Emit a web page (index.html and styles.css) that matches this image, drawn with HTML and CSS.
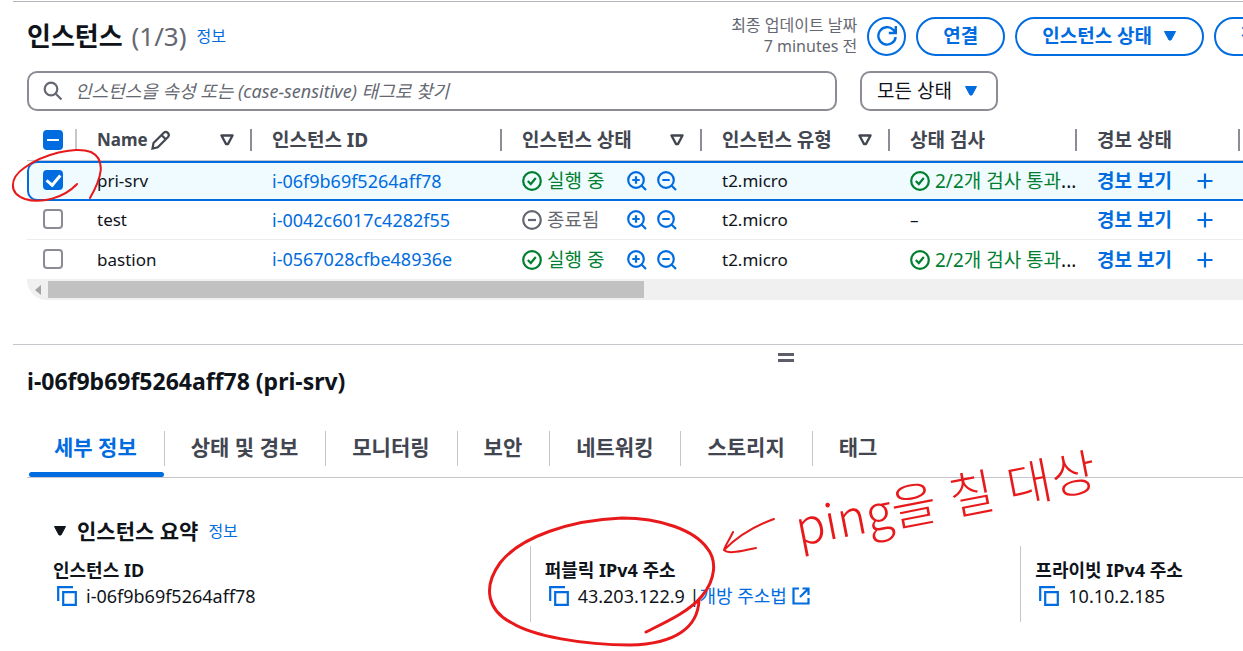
FILE: index.html
```html
<!doctype html>
<html lang="ko">
  <head>
    <meta charset="UTF-8" />
    <meta name="viewport" content="width=device-width, initial-scale=1.0" />
    <title>인스턴스</title>
    <link rel="stylesheet" href="styles.css">
  </head>
  <body>
    <!-- shared icons -->
    <svg class="sprite" aria-hidden="true">
      <symbol id="i-ok" viewBox="0 0 20 20">
        <circle cx="10" cy="10" r="8.8" /><path d="M5.8 10l3 3 5-6" />
      </symbol>
      <symbol id="i-stop" viewBox="0 0 20 20">
        <circle cx="10" cy="10" r="8.8" /><path d="M6 10h8" />
      </symbol>
      <symbol id="i-zoom-in" viewBox="0 0 20 20">
        <circle cx="9" cy="9" r="7.8" /><path d="M14.5 14.5l4.5 4.5M5.3 9h7.4M9 5.3v7.4" />
      </symbol>
      <symbol id="i-zoom-out" viewBox="0 0 20 20">
        <circle cx="9" cy="9" r="7.8" /><path d="M14.5 14.5l4.5 4.5M5.3 9h7.4" />
      </symbol>
      <symbol id="i-plus" viewBox="0 0 20 20"><path d="M10 2.5v15M2.5 10h15" /></symbol>
      <symbol id="i-copy" viewBox="0 0 20 20">
        <path d="M1.2 15V1.2H16" /><path d="M6.2 6.2h12.6v12.6H6.2z" />
      </symbol>
      <symbol id="i-caret" viewBox="0 0 14 12">
        <path d="M1.5 1.5h11L8 10H6z" />
      </symbol>
    </svg>

    <main class="page">
      <section class="instances">
        <header class="toolbar">
          <h1>인스턴스 <span class="count">(1/3)</span></h1>
          <a class="info" href="#">정보</a>
          <p class="updated">최종 업데이트 날짜<br />7 minutes 전</p>
          <div class="actions">
            <button class="btn btn-round" aria-label="새로 고침">
              <svg class="icon refresh" viewBox="0 0 20 20"><path d="M18.7 11a8.7 8.7 0 1 1-2.4-7.2l2.2 2.7M18.8 0v7h-7" /></svg>
            </button>
            <button class="btn">연결</button>
            <button class="btn">인스턴스 상태 <svg class="caret"><use href="#i-caret" /></svg></button>
            <button class="btn btn-last">작업 <svg class="caret"><use href="#i-caret" /></svg></button>
          </div>
        </header>

        <div class="filters">
          <div class="search">
            <svg class="icon" viewBox="0 0 20 20"><circle cx="8" cy="8" r="6.3" /><path d="M12.5 12.5l6 6" /></svg>
            <input type="text" aria-label="인스턴스 찾기" placeholder="인스턴스을 속성 또는 (case-sensitive) 태그로 찾기" />
          </div>
          <div class="state-filter">
            <select aria-label="상태 필터"><option>모든 상태</option></select>
            <svg class="caret"><use href="#i-caret" /></svg>
          </div>
        </div>

        <div class="table-wrap">
          <table>
            <colgroup>
              <col class="c-check" /><col class="c-name" /><col class="c-id" /><col class="c-state" />
              <col class="c-type" /><col class="c-status" /><col class="c-alarm" /><col />
            </colgroup>
            <thead>
              <tr>
                <th><div class="head light"><input type="checkbox" class="some" aria-label="모두 선택" /></div></th>
                <th><div class="head"><span class="latin">Name</span>
                  <svg class="icon pencil" viewBox="0 0 20 20"><path d="M1.5 18.5l1-5.5L12.8 2.7q2-1.8 4 .2t.2 4L6.8 17.3zM10.5 5l4.5 4.5" /></svg>
                  <svg class="caret sort"><use href="#i-caret" /></svg></div></th>
                <th><div class="head">인스턴스 ID</div></th>
                <th><div class="head">인스턴스 상태 <svg class="caret sort"><use href="#i-caret" /></svg></div></th>
                <th><div class="head">인스턴스 유형 <svg class="caret sort"><use href="#i-caret" /></svg></div></th>
                <th><div class="head">상태 검사</div></th>
                <th><div class="head">경보 상태</div></th>
                <th></th>
              </tr>
            </thead>
            <tbody>
              <tr class="selected">
                <td class="pick"><input type="checkbox" aria-label="pri-srv" checked /></td>
                <td>pri-srv</td>
                <td><a class="id" href="#">i-06f9b69f5264aff78</a></td>
                <td><div class="cell">
                  <span class="state ok"><svg class="icon"><use href="#i-ok" /></svg>실행 중</span>
                  <button class="tool" aria-label="필터 추가"><svg class="icon"><use href="#i-zoom-in" /></svg></button>
                  <button class="tool" aria-label="필터 제외"><svg class="icon"><use href="#i-zoom-out" /></svg></button>
                </div></td>
                <td>t2.micro</td>
                <td><span class="check ok"><svg class="icon"><use href="#i-ok" /></svg>2/2개 검사 통과<span class="dots">...</span></span></td>
                <td><div class="cell alarm"><a href="#">경보 보기</a>
                  <button class="tool" aria-label="경보 추가"><svg class="icon"><use href="#i-plus" /></svg></button></div></td>
                <td></td>
              </tr>
              <tr>
                <td class="pick"><input type="checkbox" aria-label="test" /></td>
                <td>test</td>
                <td><a class="id" href="#">i-0042c6017c4282f55</a></td>
                <td><div class="cell">
                  <span class="state stopped"><svg class="icon"><use href="#i-stop" /></svg>종료됨</span>
                  <button class="tool" aria-label="필터 추가"><svg class="icon"><use href="#i-zoom-in" /></svg></button>
                  <button class="tool" aria-label="필터 제외"><svg class="icon"><use href="#i-zoom-out" /></svg></button>
                </div></td>
                <td>t2.micro</td>
                <td>–</td>
                <td><div class="cell alarm"><a href="#">경보 보기</a>
                  <button class="tool" aria-label="경보 추가"><svg class="icon"><use href="#i-plus" /></svg></button></div></td>
                <td></td>
              </tr>
              <tr>
                <td class="pick"><input type="checkbox" aria-label="bastion" /></td>
                <td>bastion</td>
                <td><a class="id" href="#">i-0567028cfbe48936e</a></td>
                <td><div class="cell">
                  <span class="state ok"><svg class="icon"><use href="#i-ok" /></svg>실행 중</span>
                  <button class="tool" aria-label="필터 추가"><svg class="icon"><use href="#i-zoom-in" /></svg></button>
                  <button class="tool" aria-label="필터 제외"><svg class="icon"><use href="#i-zoom-out" /></svg></button>
                </div></td>
                <td>t2.micro</td>
                <td><span class="check ok"><svg class="icon"><use href="#i-ok" /></svg>2/2개 검사 통과<span class="dots">...</span></span></td>
                <td><div class="cell alarm"><a href="#">경보 보기</a>
                  <button class="tool" aria-label="경보 추가"><svg class="icon"><use href="#i-plus" /></svg></button></div></td>
                <td></td>
              </tr>
            </tbody>
          </table>
        </div>
        <div class="scrollbar">
          <svg class="scroll-arrow" viewBox="0 0 6 10"><path d="M6 0v10L0 5z" /></svg>
          <div class="thumb"></div>
        </div>
      </section>

      <section class="details">
        <div class="handle"></div>
        <h2>i-06f9b69f5264aff78 (pri-srv)</h2>
        <nav class="tabs">
          <a class="tab active" href="#">세부 정보</a>
          <a class="tab" href="#">상태 및 경보</a>
          <a class="tab" href="#">모니터링</a>
          <a class="tab" href="#">보안</a>
          <a class="tab" href="#">네트워킹</a>
          <a class="tab" href="#">스토리지</a>
          <a class="tab" href="#">태그</a>
        </nav>

        <div class="summary">
          <h3><svg class="caret"><use href="#i-caret" /></svg>인스턴스 요약 <a class="info" href="#">정보</a></h3>
          <dl class="facts">
            <div class="fact">
              <dt>인스턴스 ID</dt>
              <dd><svg class="icon copy"><use href="#i-copy" /></svg>i-06f9b69f5264aff78</dd>
            </div>
            <div class="fact">
              <dt>퍼블릭 IPv4 주소</dt>
              <dd><svg class="icon copy"><use href="#i-copy" /></svg>43.203.122.9 |
                <a href="#">개방 주소법 <svg class="icon external" viewBox="0 0 20 20"><path d="M8 2.5H2.5v15h15V12M11.5 2.5h6V9M17 3l-8 8" /></svg></a></dd>
            </div>
            <div class="fact">
              <dt>프라이빗 IPv4 주소</dt>
              <dd><svg class="icon copy"><use href="#i-copy" /></svg>10.10.2.185</dd>
            </div>
          </dl>
        </div>
      </section>

      <!-- pen marks on top of the console -->
      <svg class="ink" width="1243" height="651" viewBox="0 0 1243 651">
        <path class="thin" d="M77 184C64 198 41 204 25 199C8 193 10 178 24 168C43 154 75 146 91 152C107 160 101 179 90 198" />
        <path d="M646 632C664 623 689 612 702 596C716 579 717 560 707 548C694 530 660 518 622 518C570 520 520 537 500 563C482 588 488 611 512 623C533 636 583 645 630 645C676 644 698 627 699 600" />
        <path class="thin" d="M774 519C757 525 739 535 724 550C726 544 730 539 733 532M724 550C729 555 744 550 756 548" />
        <text class="note" x="799" y="546" transform="rotate(-11 799 546)">ping을 칠 대상</text>
      </svg>
    </main>
  </body>
</html>
```

FILE: styles.css
```css
* {
  box-sizing: border-box;
}
body {
  margin: 0;
  background: #fff;
  color: #0f141a;
  font-family: "Noto Sans", "Noto Sans CJK KR", sans-serif;
  font-size: 17px;
  line-height: 26px;
}
h1,
h2,
h3,
p,
dl,
dd {
  margin: 0;
}
a {
  color: #006ce0;
  text-decoration: none;
}
button,
input,
select {
  font: inherit;
  margin: 0;
}
.page {
  position: relative;
  padding: 1px 0 0 13px;
  overflow: hidden;
}
.sprite {
  display: none;
}
.icon {
  flex: none;
  width: 20px;
  height: 20px;
  fill: none;
  stroke: currentColor;
  stroke-width: 2.2;
}
.caret {
  flex: none;
  width: 14px;
  height: 12px;
  fill: currentColor;
  stroke: currentColor;
  stroke-width: 1;
  stroke-linejoin: round;
}
.info {
  font-size: 16px;
  font-weight: 400;
}

/* instance list */
.instances {
  border-top: 1px solid #b4b4bb;
  padding: 13px 0 0 14px;
}
.toolbar {
  display: flex;
  align-items: center;
}
h1 {
  font-size: 26px;
  line-height: 36px;
  margin-right: 10px;
}
.count {
  margin-left: 2px;
  color: #656871;
  font-weight: 400;
}
.updated {
  margin-left: auto;
  color: #656871;
  font-size: 16px;
  line-height: 21px;
  text-align: right;
}
.actions {
  display: flex;
  gap: 10px;
  margin-left: 10px;
}
.btn {
  display: flex;
  align-items: center;
  gap: 11px;
  height: 39px;
  padding: 0 25px;
  border: 2px solid #006ce0;
  border-radius: 20px;
  background: #fff;
  color: #006ce0;
  font-size: 19px;
  font-weight: 700;
  white-space: nowrap;
}
.btn-round {
  width: 39px;
  padding: 0;
  justify-content: center;
}
.refresh {
  stroke-width: 2.4;
}
.btn-last {
  margin-right: -85px;
}
.filters {
  display: flex;
  gap: 23px;
  margin-top: 14px;
}
.search {
  display: flex;
  align-items: center;
  flex: 0 1 810px;
  height: 40px;
  padding-left: 14px;
  border: 2px solid #8c8c94;
  border-radius: 10px;
  color: #656871;
}
.search input {
  flex: 1;
  min-width: 0;
  padding: 0 12px;
  border: 0;
  outline: 0;
  background: none;
  font-size: 18px;
}
.search input::placeholder {
  color: #656871;
  font-style: italic;
}
.state-filter {
  display: flex;
  align-items: center;
  color: #006ce0;
}
.state-filter select {
  appearance: none;
  width: 138px;
  height: 40px;
  padding: 0 15px;
  border: 2px solid #8c8c94;
  border-radius: 10px;
  background: none;
  color: #0f141a;
  font-size: 19px;
}
.state-filter .caret {
  margin-left: -34px;
  pointer-events: none;
}
.table-wrap {
  overflow: hidden;
  margin-top: 9px;
}
table {
  width: calc(100% + 40px);
  table-layout: fixed;
  border-collapse: separate;
  border-spacing: 0;
}
.c-check {
  width: 50px;
}
.c-name {
  width: 175px;
}
.c-id {
  width: 250px;
}
.c-state {
  width: 200px;
}
.c-type {
  width: 188px;
}
.c-status {
  width: 187px;
}
.c-alarm {
  width: 163px;
}
th {
  height: 41px;
  padding: 0;
  border-bottom: 1px solid #c6c6cd;
  color: #424650;
  text-align: left;
}
.head {
  display: flex;
  align-items: center;
  height: 22px;
  padding: 0 16px 0 20px;
  border-right: 2px solid #8c8c94;
  font-size: 19px;
}
.head.light {
  padding: 0 0 0 16px;
  border-color: #c6c6cd;
}
.latin {
  font-size: 17px;
}
.pencil {
  margin-left: 3px;
}
.sort {
  margin-left: auto;
  fill: none;
  stroke-width: 2.4;
}
td {
  height: 39px;
  padding: 0 0 0 20px;
  border-bottom: 1px solid #ebebf0;
  white-space: nowrap;
}
tr:last-child td {
  border-bottom: 0;
}
td.pick {
  padding: 0 0 2px 16px;
}
.selected td {
  height: 40px;
  border-top: 2px solid #006ce0;
  border-bottom: 2px solid #006ce0;
  background: #f0fbff;
}
.selected td.pick {
  padding-left: 14px;
  border-left: 2px solid #006ce0;
  border-radius: 10px 0 0 10px;
}
input[type="checkbox"] {
  appearance: none;
  display: grid;
  place-items: center;
  width: 20px;
  height: 20px;
  border: 2px solid #8c8c94;
  border-radius: 4px;
  background: #fff;
}
input[type="checkbox"]:checked,
input[type="checkbox"].some {
  border-color: #006ce0;
  background: #006ce0;
}
input[type="checkbox"]:checked::after {
  content: "";
  width: 6px;
  height: 11px;
  margin-bottom: 3px;
  border: solid #fff;
  border-width: 0 3px 3px 0;
  transform: rotate(40deg);
}
input[type="checkbox"].some::after {
  content: "";
  width: 12px;
  height: 2px;
  background: #fff;
}
.id {
  font-size: 18px;
}
.cell {
  display: flex;
  align-items: center;
  gap: 10px;
}
.state {
  display: flex;
  align-items: center;
  gap: 5px;
  width: 95px;
  font-size: 19px;
}
.check {
  display: flex;
  align-items: center;
  font-size: 19px;
}
.check .icon {
  margin-right: 5px;
}
.ok {
  color: #00802f;
}
.stopped {
  color: #656871;
}
.dots {
  color: #0f141a;
}
.tool {
  display: flex;
  padding: 0;
  border: 0;
  background: none;
  color: #006ce0;
}
.alarm {
  justify-content: space-between;
  padding-right: 25px;
  font-size: 19px;
  font-weight: 700;
}
.scrollbar {
  display: flex;
  align-items: center;
  height: 21px;
  border-radius: 0 0 0 20px;
  background: #f0f0f0;
}
.scroll-arrow {
  width: 6px;
  height: 10px;
  margin: 0 7px 0 8px;
  fill: #a3a3a3;
}
.thumb {
  width: 49%;
  height: 17px;
  background: #c1c1c1;
}

/* split panel, runs past the right edge of the window */
.details {
  width: calc(100% + 316px);
  margin-top: 44px;
  padding: 8px 14px 27px;
  border-top: 1px solid #c6c6cd;
}
.handle {
  width: 16px;
  height: 9px;
  margin: 0 auto;
  border: solid #5c5f69;
  border-width: 3px 0;
}
h2 {
  margin-top: 4px;
  font-size: 23px;
  line-height: 30px;
}
.tabs {
  display: flex;
  align-items: flex-start;
  margin-top: 35px;
  border-bottom: 1px solid #c6c6cd;
}
.tab {
  position: relative;
  height: 46px;
  padding: 0 27px;
  color: #424650;
  font-size: 21px;
  font-weight: 700;
  line-height: 33px;
}
.tab + .tab::before {
  content: "";
  position: absolute;
  left: 0;
  top: 0;
  height: 35px;
  border-left: 1px solid #c6c6cd;
}
.tab.active {
  color: #006ce0;
}
.tab.active::after {
  content: "";
  position: absolute;
  left: 2px;
  right: 0;
  bottom: 0;
  height: 5px;
  border-radius: 3px;
  background: #006ce0;
}
.summary {
  padding: 38px 34px 0 12px;
}
h3 {
  display: flex;
  align-items: center;
  gap: 10px;
  padding-left: 14px;
  font-size: 21px;
  line-height: 30px;
}
.facts {
  display: grid;
  grid-template-columns: repeat(3, 1fr);
}
.fact {
  height: 76px;
  padding: 11px 0 0 14px;
}
.fact + .fact {
  border-left: 1px solid #c6c6cd;
}
dt {
  font-size: 18px;
  font-weight: 700;
}
dd {
  display: flex;
  align-items: center;
  font-size: 18px;
}
dd a {
  display: flex;
  align-items: center;
  gap: 4px;
}
.copy {
  margin: 0 9px 0 4px;
  color: #006ce0;
}

.ink {
  position: absolute;
  left: 0;
  top: 0;
  pointer-events: none;
  fill: none;
  stroke: #e8191b;
  stroke-width: 3;
  stroke-linecap: round;
  stroke-linejoin: round;
}
.ink .thin {
  stroke-width: 2;
}
.note {
  fill: #e8191b;
  stroke: none;
  font-family: "Noto Sans CJK KR", sans-serif;
  font-size: 49px;
  font-weight: 300;
}
```
